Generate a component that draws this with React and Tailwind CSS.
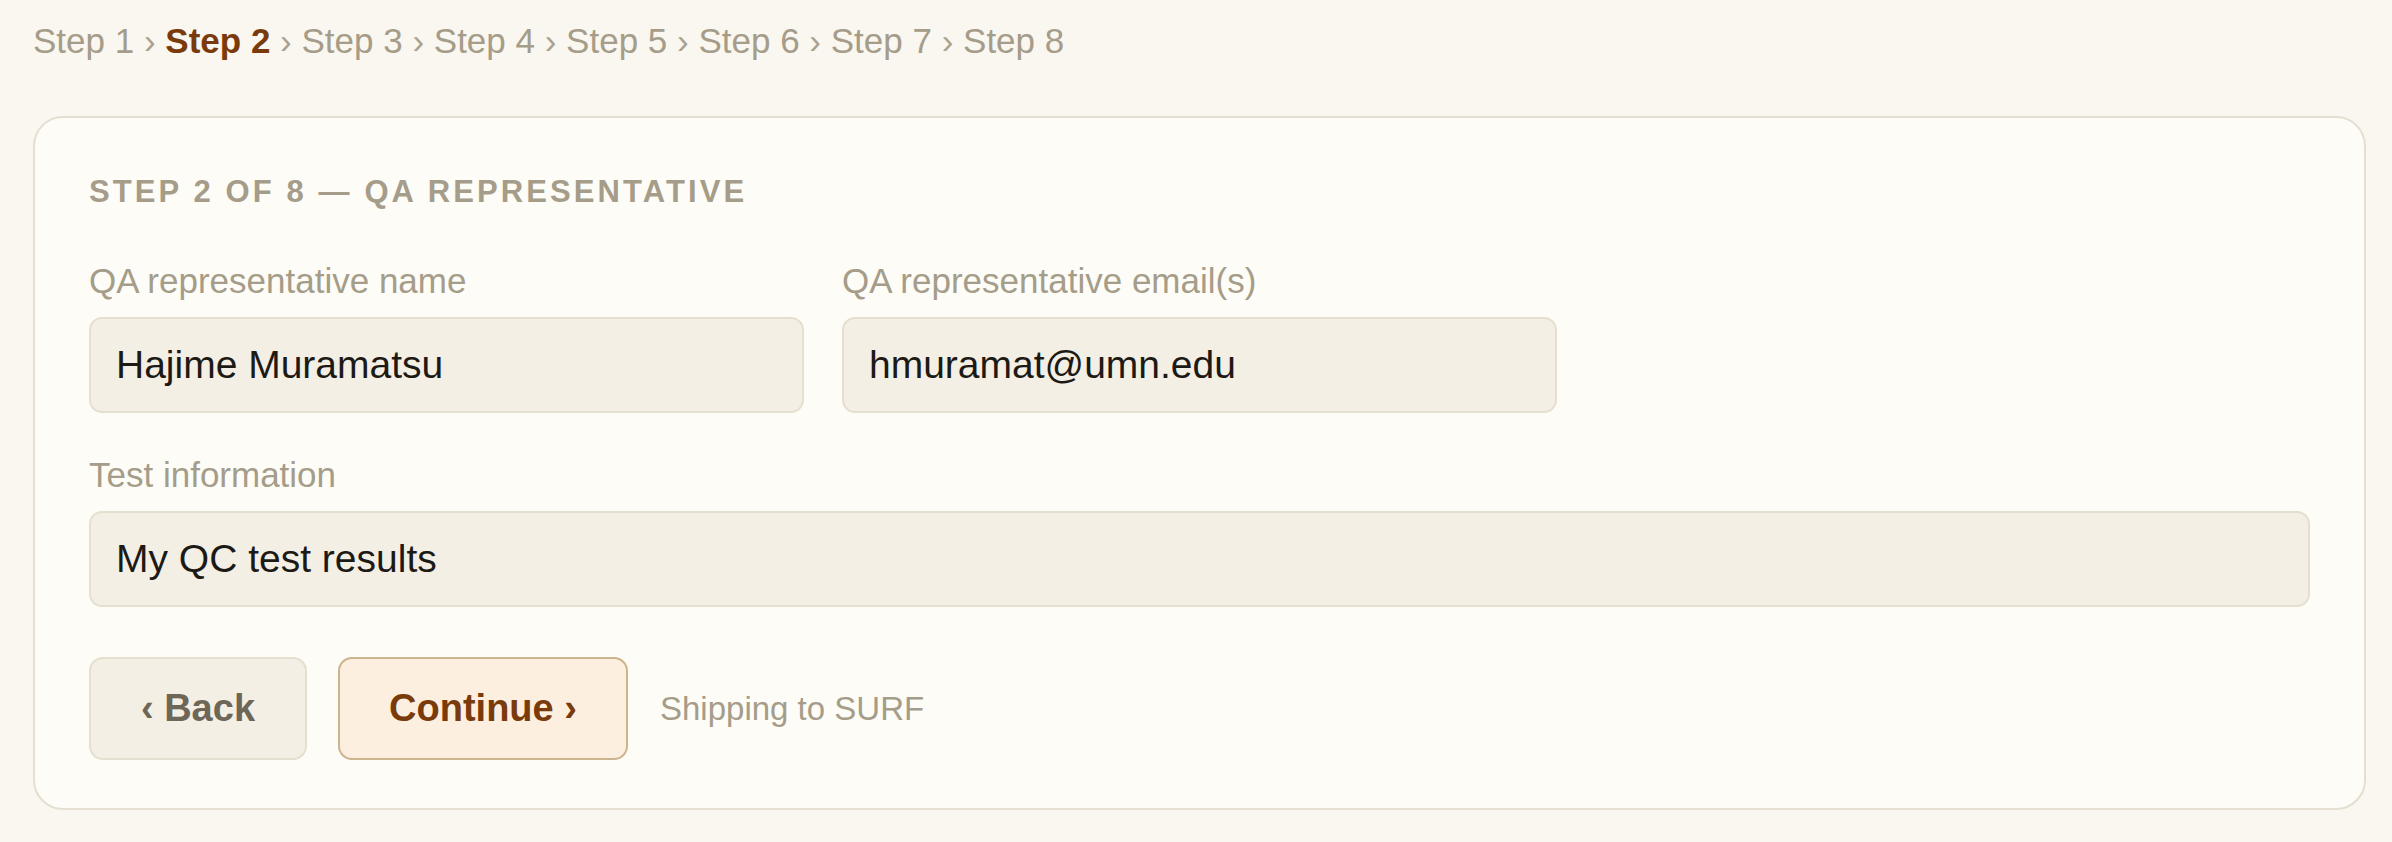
import { useState } from "react";

const steps = ["Step 1", "Step 2", "Step 3", "Step 4", "Step 5", "Step 6", "Step 7", "Step 8"];

function Field({ label, value, onChange, className = "" }) {
  return (
    <div className={className}>
      <label className="block text-[35px] leading-[48px] text-[#a59c89] mb-[12px]">
        {label}
      </label>
      <input
        type="text"
        value={value}
        onChange={(e) => onChange(e.target.value)}
        className="w-full h-[96px] px-[25px] text-[39px] text-[#1d1a15] bg-[#f3efe5] border-2 border-[#e5dfd0] rounded-[13px] outline-none"
      />
    </div>
  );
}

export default function App() {
  const [current] = useState(2);
  const [name, setName] = useState("Hajime Muramatsu");
  const [email, setEmail] = useState("hmuramat@umn.edu");
  const [info, setInfo] = useState("My QC test results");

  return (
    <div className="min-h-screen bg-[#faf7f0] pl-[33px] pr-[26px] pt-[14px] pb-[30px] font-['Liberation_Sans',Arial,sans-serif]">
      <nav className="text-[35px] leading-[54px] text-[#a59c89] whitespace-nowrap">
        {steps.map((s, i) => (
          <span key={s}>
            {i > 0 && <span className="text-[#aaa291]"> › </span>}
            <span className={i + 1 === current ? "font-bold text-[#7a3b0c]" : ""}>{s}</span>
          </span>
        ))}
      </nav>

      <div className="mt-[48px] bg-[#fdfcf7] border-2 border-[#e4dfd0] rounded-[30px] px-[54px] pt-[54px] pb-[48px]">
        <h2 className="text-[31px] leading-[40px] font-bold uppercase tracking-[0.1em] text-[#a59c89] mb-[45px]">
          Step 2 of 8 — QA representative
        </h2>

        <div className="grid grid-cols-3 gap-x-[38px] gap-y-[38px]">
          <Field label="QA representative name" value={name} onChange={setName} />
          <Field label="QA representative email(s)" value={email} onChange={setEmail} />
          <div />
          <Field label="Test information" value={info} onChange={setInfo} className="col-span-3" />
        </div>

        <div className="flex items-center mt-[50px]">
          <button className="w-[218px] h-[103px] bg-[#f3efe5] border-2 border-[#e5dfd0] rounded-[14px] text-[38px] font-bold text-[#6e6656]">
            ‹ Back
          </button>
          <button className="ml-[31px] w-[290px] h-[103px] bg-[#fdefdf] border-2 border-[#ccb48f] rounded-[14px] text-[38px] font-bold text-[#7a3b0c]">
            Continue ›
          </button>
          <span className="ml-[32px] text-[33px] text-[#a59c89]">Shipping to SURF</span>
        </div>
      </div>
    </div>
  );
}
